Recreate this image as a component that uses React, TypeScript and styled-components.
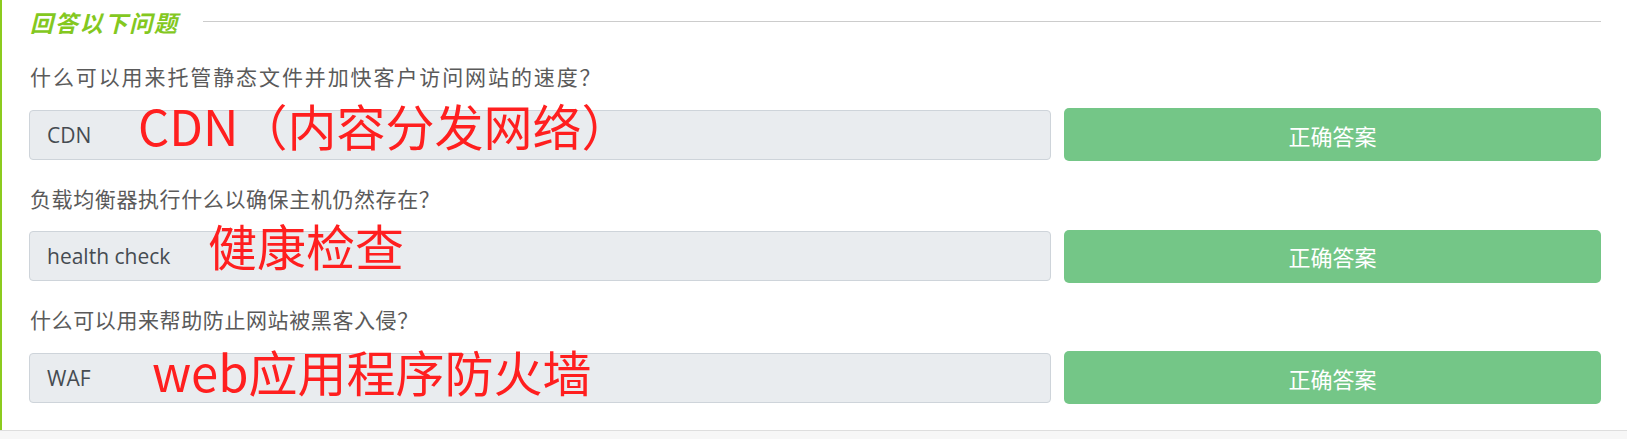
import React from "react";
import styled, { createGlobalStyle } from "styled-components";

const GlobalStyle = createGlobalStyle`
  html, body {
    margin: 0;
    padding: 0;
    background: #ffffff;
  }
  body {
    font-family: "Noto Sans CJK SC", "Noto Sans", sans-serif;
  }
`;

const Page = styled.div`
  width: 1627px;
  display: flex;
  flex-direction: column;
`;

const Panel = styled.section`
  border-left: 2px solid #8ccb1e;
  padding: 0 26px 26px 27px;
  display: flex;
  flex-direction: column;
`;

const TitleRow = styled.div`
  height: 44px;
  display: flex;
  align-items: center;
  gap: 24px;
`;

const Title = styled.h2`
  margin: 0;
  padding-left: 1px;
  font-family: "Noto Sans CJK SC", sans-serif;
  font-size: 23px;
  font-weight: 700;
  font-style: italic;
  letter-spacing: 1.8px;
  color: #84c81f;
  line-height: 1;
  white-space: nowrap;
`;

const Rule = styled.div`
  flex: 1;
  height: 1px;
  background: #cccccc;
  margin-top: -2px;
`;

const QuestionList = styled.div`
  margin-top: 17px;
  display: flex;
  flex-direction: column;
  gap: 21.5px;
`;

const QuestionBlock = styled.div`
  display: flex;
  flex-direction: column;
`;

const QuestionText = styled.p<{ $spacing: number }>`
  margin: 0 0 17px 1px;
  font-family: "Noto Sans CJK SC", sans-serif;
  font-size: 21px;
  letter-spacing: ${(p) => p.$spacing}px;
  line-height: 30px;
  color: #5a5a5a;
`;

const AnswerRow = styled.div`
  display: flex;
  align-items: center;
  gap: 13px;
  height: 53px;
`;

const AnswerField = styled.div`
  position: relative;
  flex: 1;
  height: 50px;
  box-sizing: border-box;
  background: #e9ecef;
  border: 1px solid #ced4da;
  border-radius: 4px;
  padding: 0 17px;
  display: flex;
  align-items: center;
`;

const AnswerValue = styled.span`
  font-family: "Open Sans", "Noto Sans", sans-serif;
  font-size: 21px;
  color: #454b51;
`;

const Note = styled.span<{ $left: number; $top: number }>`
  position: absolute;
  left: ${(p) => p.$left}px;
  top: ${(p) => p.$top}px;
  font-family: "Noto Sans CJK SC", sans-serif;
  font-size: 49px;
  line-height: 1;
  color: #ff1f1f;
  white-space: nowrap;
  pointer-events: none;
`;

const RevealButton = styled.button`
  width: 537px;
  height: 53px;
  flex: none;
  border: none;
  border-radius: 5px;
  background: #74c687;
  color: #ffffff;
  font-family: "Noto Sans CJK SC", sans-serif;
  font-size: 22px;
  cursor: pointer;
`;

const Footer = styled.div`
  height: 8px;
  border-top: 1px solid #dedede;
  background: #f7f7f7;
`;

const items = [
  {
    q: "什么可以用来托管静态文件并加快客户访问网站的速度？",
    a: "CDN",
    note: "CDN（内容分发网络）",
    left: 108,
    top: -11,
    spacing: 1.9,
  },
  {
    q: "负载均衡器执行什么以确保主机仍然存在？",
    a: "health check",
    note: "健康检查",
    left: 178,
    top: -12,
    spacing: 0.6,
  },
  {
    q: "什么可以用来帮助防止网站被黑客入侵？",
    a: "WAF",
    note: "web应用程序防火墙",
    left: 122,
    top: -8,
    spacing: 0.6,
  },
];

export default function App() {
  return (
    <>
      <GlobalStyle />
      <Page>
        <Panel>
          <TitleRow>
            <Title>回答以下问题</Title>
            <Rule />
          </TitleRow>
          <QuestionList>
            {items.map((it) => (
              <QuestionBlock key={it.a}>
                <QuestionText $spacing={it.spacing}>{it.q}</QuestionText>
                <AnswerRow>
                  <AnswerField>
                    <AnswerValue>{it.a}</AnswerValue>
                    <Note $left={it.left} $top={it.top}>
                      {it.note}
                    </Note>
                  </AnswerField>
                  <RevealButton type="button">正确答案</RevealButton>
                </AnswerRow>
              </QuestionBlock>
            ))}
          </QuestionList>
        </Panel>
        <Footer />
      </Page>
    </>
  );
}
